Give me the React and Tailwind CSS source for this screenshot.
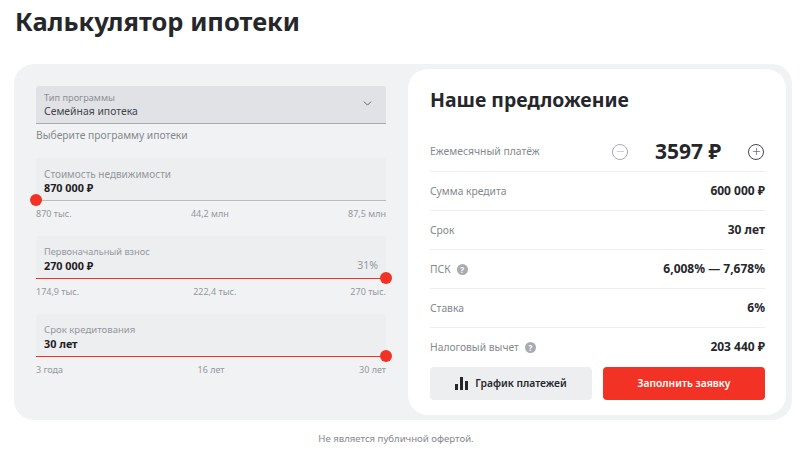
import React from "react";
import { ChevronDown, Plus, Minus } from "lucide-react";

const font = { fontFamily: '"Noto Sans", sans-serif' };

/* Slider field with value box, track and scale labels */
const SliderField = ({ label, labelSize, value, percent, scale, filled, mb }) => (
  <div className={mb}>
    <div className="relative h-[43px] bg-[#edeef0] px-2 pt-[9px] rounded-t-[3px]">
      <div className={`${labelSize} leading-[14px] text-[#94979c]`}>{label}</div>
      <div className="text-[10.8px] leading-[17px] mt-[-2px] font-bold text-[#1f2024]">{value}</div>
      {percent && (
        <div className="absolute right-2 top-[21px] text-[10.5px] leading-[17px] text-[#94979c]">{percent}</div>
      )}
      <div className={filled ? "absolute left-0 right-0 bottom-0 h-[1.5px] bg-[#f23224]" : "absolute left-0 right-0 bottom-0 h-px bg-[#b9bbc0]"} />
      <div className={filled ? "absolute right-[-6px] bottom-[-5px] w-3 h-3 rounded-full bg-[#f23224]" : "absolute left-[-6px] bottom-[-5px] w-3 h-3 rounded-full bg-[#f23224]"} />
    </div>
    <div className="flex justify-between mt-[6px] text-[9px] leading-[14px] text-[#94979c]">
      {scale.map((s) => (
        <span key={s}>{s}</span>
      ))}
    </div>
  </div>
);

const Hint = () => (
  <span className="w-[11px] h-[11px] rounded-full bg-[#a9abb0] text-white text-[8px] leading-[11px] font-bold text-center">?</span>
);

const Row = ({ label, value, hint, last }) => (
  <div className={last ? "flex items-center justify-between h-[38px]" : "flex items-center justify-between h-[39px] border-b border-[#eceef0]"}>
    <div className="flex items-center gap-[6px] pt-[1px] text-[10.3px] text-[#85888d]">
      {label}
      {hint && <Hint />}
    </div>
    <div className="text-[12px] font-bold text-[#26272b]">{value}</div>
  </div>
);

export default function App() {
  return (
    <div className="w-[800px] h-[455px] bg-white overflow-hidden" style={font}>
      <h1 className="pl-[15px] pt-[3px] h-[64px] text-[25.5px] leading-[36px] font-bold text-[#26272b]">
        Калькулятор ипотеки
      </h1>

      <div className="ml-[14px] w-[778px] h-[356px] bg-[#f1f2f4] rounded-[20px] flex p-[5px]">
        {/* Left: inputs */}
        <div className="w-[389px] pl-[17px] pr-[22px] pt-[17px]">
          <div className="relative h-[38px] bg-[#e1e2e6] rounded-t-[3px] border-b border-[#a9abb0] px-2 pt-[5px]">
            <div className="text-[9.2px] leading-[13px] text-[#8c8f94]">Тип программы</div>
            <div className="text-[10.4px] leading-[14px] text-[#44464b]">Семейная ипотека</div>
            <ChevronDown className="absolute right-[12px] top-[11px] w-[13px] h-[13px] text-[#44464b]" strokeWidth={1.5} />
          </div>
          <div className="mt-[3px] mb-[15px] text-[10.3px] leading-[16px] text-[#85888d]">Выберите программу ипотеки</div>

          <SliderField
            label="Стоимость недвижимости"
            labelSize="text-[10px]"
            value="870 000 ₽"
            scale={["870 тыс.", "44,2 млн", "87,5 млн"]}
            mb="mb-[15px]"
          />
          <SliderField
            label="Первоначальный взнос"
            labelSize="text-[9.2px]"
            value="270 000 ₽"
            percent="31%"
            filled
            scale={["174,9 тыс.", "222,4 тыс.", "270 тыс."]}
            mb="mb-[15px]"
          />
          <SliderField
            label="Срок кредитования"
            labelSize="text-[9.6px]"
            value="30 лет"
            filled
            scale={["3 года", "16 лет", "30 лет"]}
          />
        </div>

        {/* Right: offer */}
        <div className="w-[378px] h-[346px] bg-white rounded-[20px] pl-[22px] pr-[21px] pt-[17px]">
          <h2 className="text-[19.4px] leading-[28px] font-bold text-[#26272b]">Наше предложение</h2>

          <div className="mt-[18px] flex items-center justify-between h-[40px] border-b border-[#eceef0]">
            <div className="pt-[1px] text-[10.4px] text-[#85888d]">Ежемесячный платёж</div>
            <div className="flex items-center mr-[1px]">
              <span className="w-4 h-4 rounded-full border border-[#a9abb0] flex items-center justify-center">
                <Minus className="w-[11px] h-[11px] text-[#a9abb0]" strokeWidth={1.25} />
              </span>
              <span className="w-[120px] text-center text-[21px] font-bold text-[#26272b]">3597 ₽</span>
              <span className="w-4 h-4 rounded-full border border-[#44464b] flex items-center justify-center">
                <Plus className="w-[11px] h-[11px] text-[#44464b]" strokeWidth={1.25} />
              </span>
            </div>
          </div>
          <Row label="Сумма кредита" value="600 000 ₽" />
          <Row label="Срок" value="30 лет" />
          <Row label="ПСК" value="6,008% — 7,678%" hint />
          <Row label="Ставка" value="6%" />
          <Row label="Налоговый вычет" value="203 440 ₽" hint last />

          <div className="flex gap-[11px] mt-[1px]">
            <button className="w-[162px] h-[33px] bg-[#edeef0] rounded-[4px] flex items-center justify-center gap-[7px] text-[10.3px] font-semibold text-[#26272b]">
              <svg width="13" height="13" viewBox="0 0 13 13" fill="#26272b">
                <rect x="0" y="7" width="3" height="6" />
                <rect x="5" y="0" width="3" height="13" />
                <rect x="10" y="4" width="3" height="9" />
              </svg>
              График платежей
            </button>
            <button className="w-[162px] h-[33px] bg-[#f23224] rounded-[4px] text-[10.3px] font-semibold text-white">
              Заполнить заявку
            </button>
          </div>
        </div>
      </div>

      <div className="mt-[11px] pr-[8px] text-center text-[9.6px] leading-[16px] text-[#85888d]">
        Не является публичной офертой.
      </div>
    </div>
  );
}
